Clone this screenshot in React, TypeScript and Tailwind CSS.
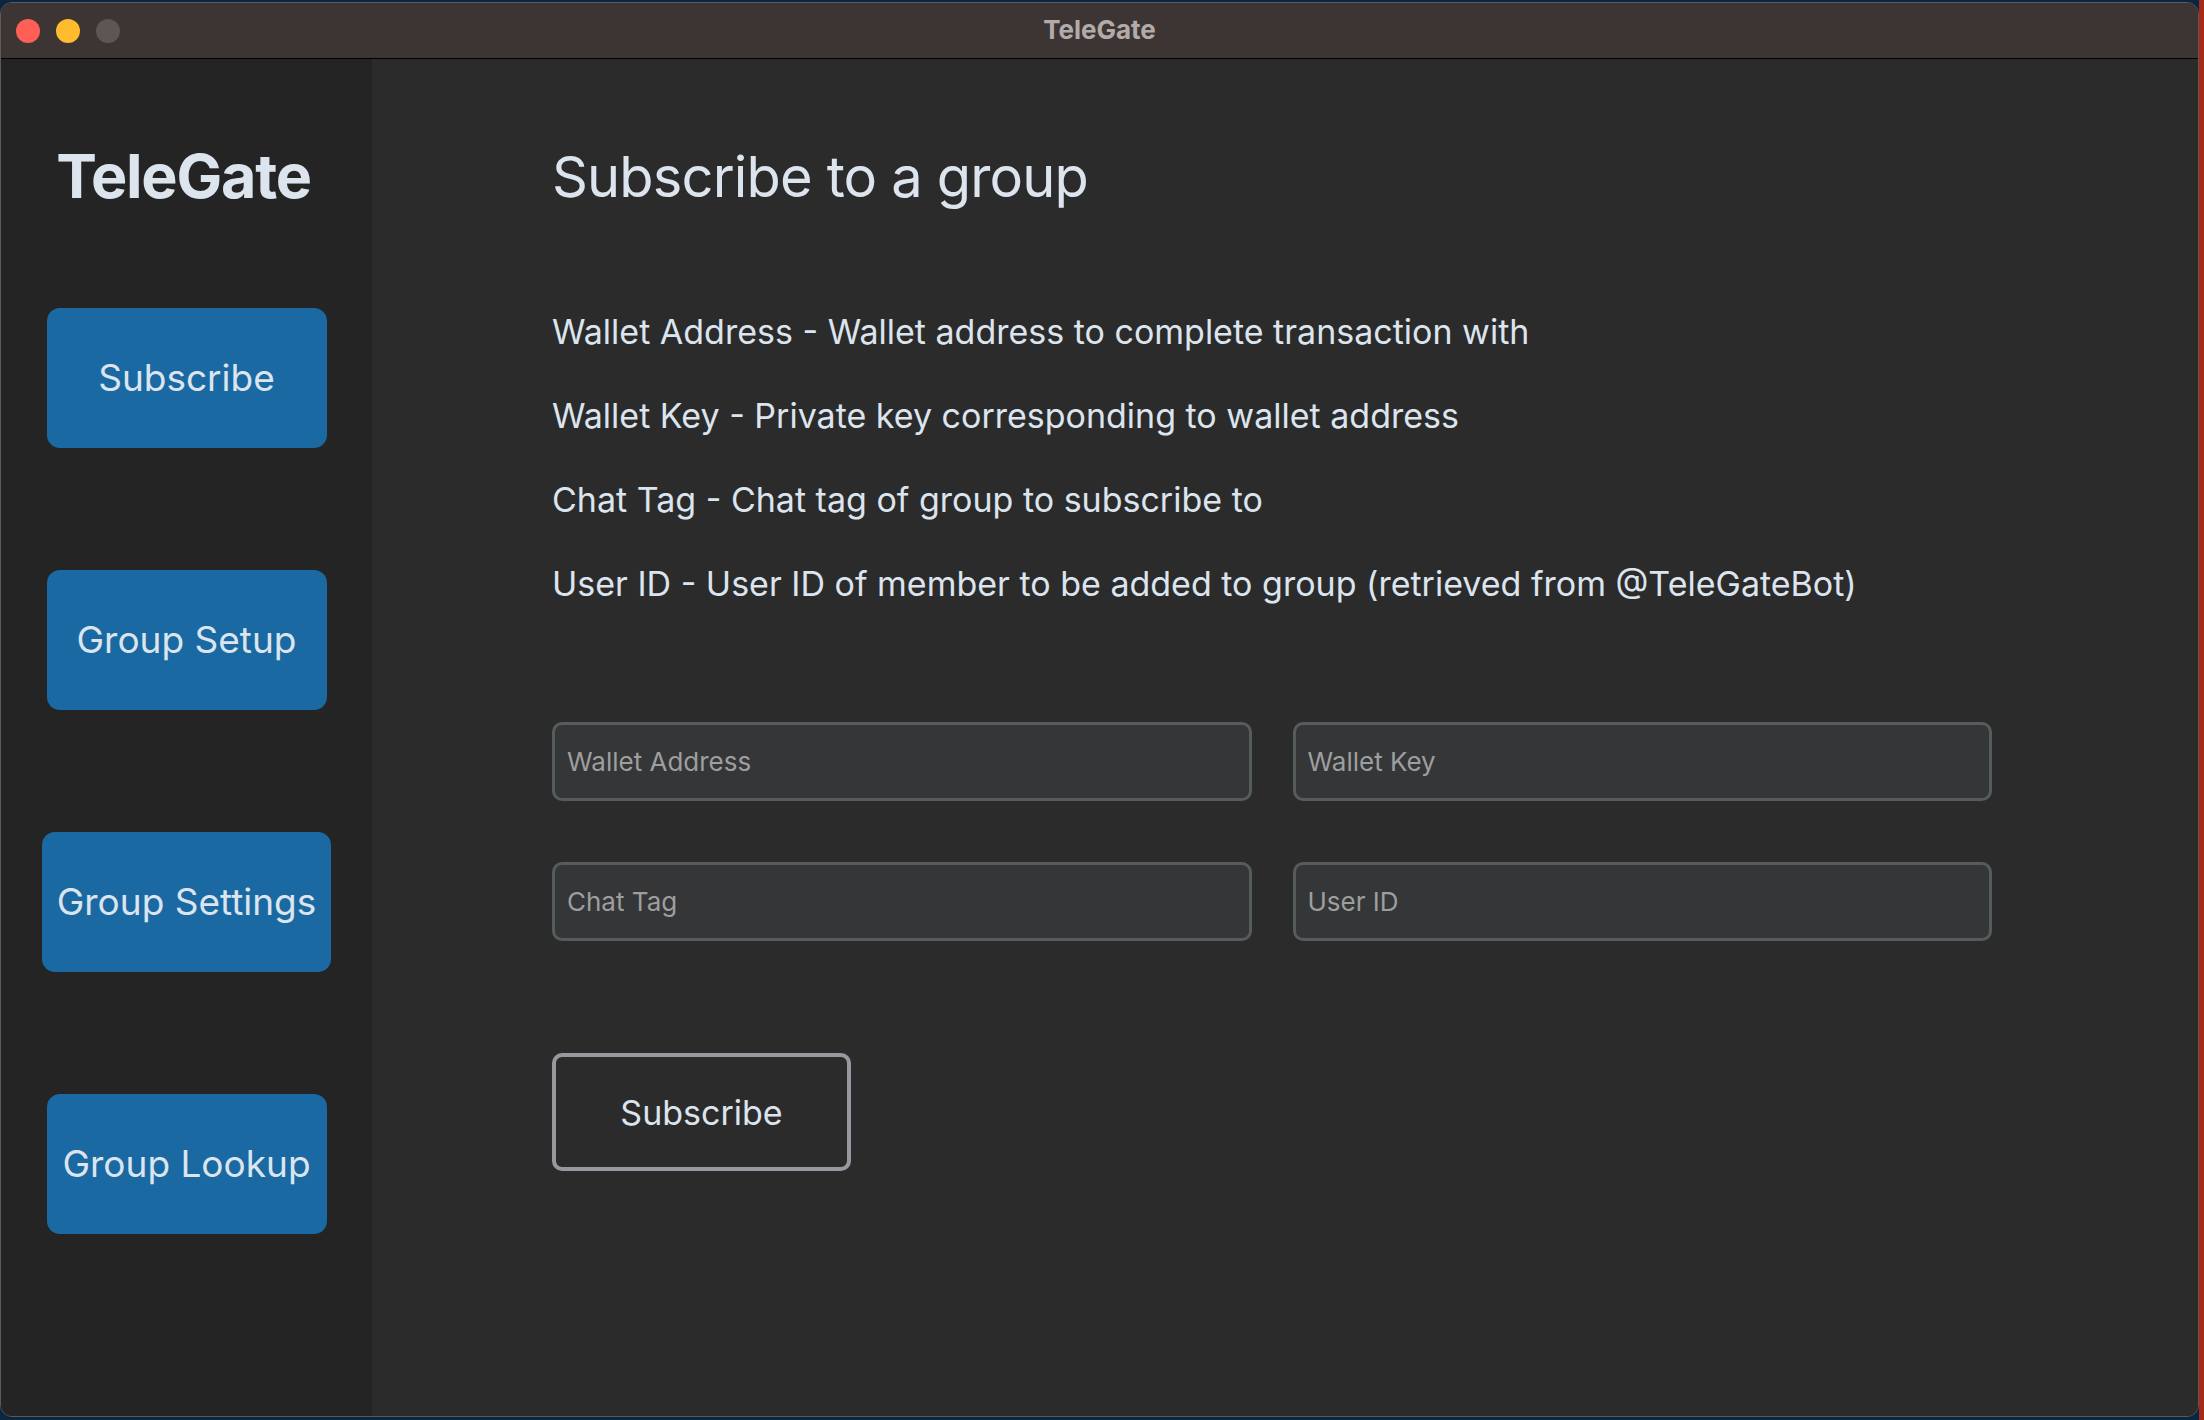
import { useState } from "react";

const navItems = ["Subscribe", "Group Setup", "Group Settings", "Group Lookup"];

const descriptions = [
  "Wallet Address - Wallet address to complete transaction with",
  "Wallet Key - Private key corresponding to wallet address",
  "Chat Tag - Chat tag of group to subscribe to",
  "User ID - User ID of member to be added to group (retrieved from @TeleGateBot)",
];

const fields = ["Wallet Address", "Wallet Key", "Chat Tag", "User ID"];

export default function App() {
  const [values, setValues] = useState<Record<string, string>>({});

  return (
    <div className="flex h-[1420px] w-[2204px] overflow-hidden bg-[#0b2640] font-['Inter','Noto_Sans',sans-serif]">
      <div className="mt-[2px] flex h-[1415px] w-[2199px] flex-col overflow-hidden rounded-[12px] border border-[#5a5a5a]">
        {/* title bar */}
        <div className="grid h-[56px] grid-cols-3 items-center border-b border-black bg-[#3d3533]">
          <div className="flex items-center gap-[16px] pl-[15px]">
            <span className="h-[24px] w-[24px] rounded-full bg-[#ff5f57]" />
            <span className="h-[24px] w-[24px] rounded-full bg-[#febc2e]" />
            <span className="h-[24px] w-[24px] rounded-full bg-[#5e5654]" />
          </div>
          <div className="pb-[2px] text-center text-[26px] font-bold text-[#b3abaa]">TeleGate</div>
          <div />
        </div>

        <div className="flex flex-1">
          {/* sidebar */}
          <div className="flex w-[371px] flex-col items-center bg-[#242424] pt-[77px]">
            <div className="mr-[6px] h-[80px] text-[61px] font-bold leading-[80px] tracking-[-0.02em] text-[#dce4ee]">
              TeleGate
            </div>
            <div className="mt-[92px] flex flex-col items-center gap-[122px]">
              {navItems.map((item) => (
                <button
                  key={item}
                  className="flex h-[140px] min-w-[280px] items-center justify-center rounded-[13px] bg-[#1a69a3] px-[15px] text-[37px] text-[#dce4ee]"
                >
                  {item}
                </button>
              ))}
            </div>
          </div>

          {/* main */}
          <div className="flex flex-1 flex-col bg-[#2b2b2b] pl-[180px] pt-[78px]">
            <h1 className="h-[80px] text-[56px] leading-[80px] tracking-[-0.015em] text-[#dce4ee]">
              Subscribe to a group
            </h1>
            <div className="mt-[73px] flex flex-col">
              {descriptions.map((d) => (
                <p key={d} className="h-[84px] text-[34px] leading-[84px] text-[#dce4ee]">
                  {d}
                </p>
              ))}
            </div>

            <div className="mt-[96px] grid w-[1440px] grid-cols-2 gap-x-[41px] gap-y-[61px]">
              {fields.map((f) => (
                <input
                  key={f}
                  placeholder={f}
                  value={values[f] ?? ""}
                  onChange={(e) => setValues({ ...values, [f]: e.target.value })}
                  className="h-[79px] rounded-[10px] border-[3px] border-[#565b5e] bg-[#343638] px-[12px] text-[26px] text-[#dce4ee] outline-none placeholder:text-[#9e9e9e]"
                />
              ))}
            </div>

            <button className="mt-[112px] flex h-[118px] w-[299px] items-center justify-center rounded-[10px] border-[4px] border-[#96999e] text-[34px] text-[#dce4ee]">
              Subscribe
            </button>
          </div>
        </div>
      </div>
      <div className="flex-1 bg-[#a52a17]" />
    </div>
  );
}
